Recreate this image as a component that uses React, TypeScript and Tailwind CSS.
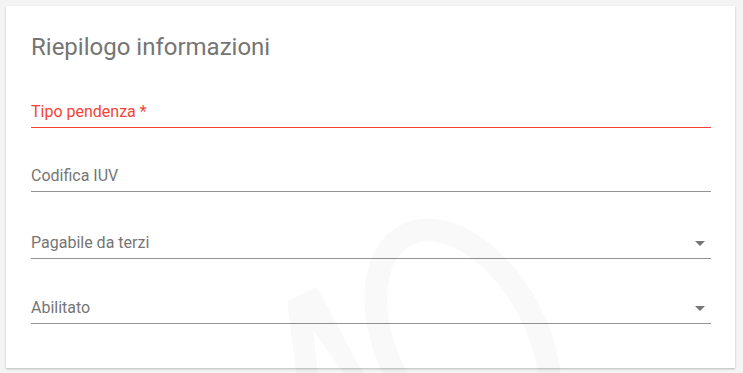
export default function App() {
  const fields = [
    { label: "Tipo pendenza *", error: true, select: false, pt: "pt-[36px]" },
    { label: "Codifica IUV", error: false, select: false, pt: "pt-[36px]" },
    { label: "Pagabile da terzi", error: false, select: true, pt: "pt-[39px]" },
    { label: "Abilitato", error: false, select: true, pt: "pt-[37px]" },
  ];

  return (
    <div
      className="relative h-[373px] w-[743px] overflow-hidden bg-[#f4f4f4] pt-[6px] pl-[6px]"
      style={{ fontFamily: "Roboto, 'Noto Sans', sans-serif" }}
    >
      <div className="h-[362px] w-[729px] bg-white pl-[25px] pr-[24px] pt-[25px] shadow-[0_1px_2px_rgba(0,0,0,0.25)]">
        <h2 className="h-[33px] text-[24px] leading-[32px] font-normal text-[#757575]">
          Riepilogo informazioni
        </h2>
        {fields.map((f) => (
          <div key={f.label} className={f.pt}>
            <div
              className={`box-content flex h-6 items-center justify-between border-b pb-[3px] ${
                f.error ? "border-[#f44336]" : "border-[#949494]"
              }`}
            >
              <span
                className={`text-[16px] leading-6 ${f.error ? "text-[#f44336]" : "text-[#757575]"}`}
              >
                {f.label}
              </span>
              {f.select && (
                <svg width="10" height="5" viewBox="0 0 10 5" className="mr-[6px]">
                  <path d="M0 0 L10 0 L5 5 Z" fill="#757575" />
                </svg>
              )}
            </div>
          </div>
        ))}
      </div>

      <svg
        className="pointer-events-none absolute inset-0"
        width="743"
        height="373"
        viewBox="0 0 743 373"
      >
        <g fill="#000" fillOpacity="0.025">
          <path d="M287 301 L317 287 L363 373 L343 373 L313 330 L318 373 L296 373 Z" />
        </g>
        <ellipse
          cx="463"
          cy="344"
          rx="74"
          ry="123"
          transform="rotate(-28 463 344)"
          fill="none"
          stroke="#000"
          strokeOpacity="0.025"
          strokeWidth="23"
        />
      </svg>
    </div>
  );
}
